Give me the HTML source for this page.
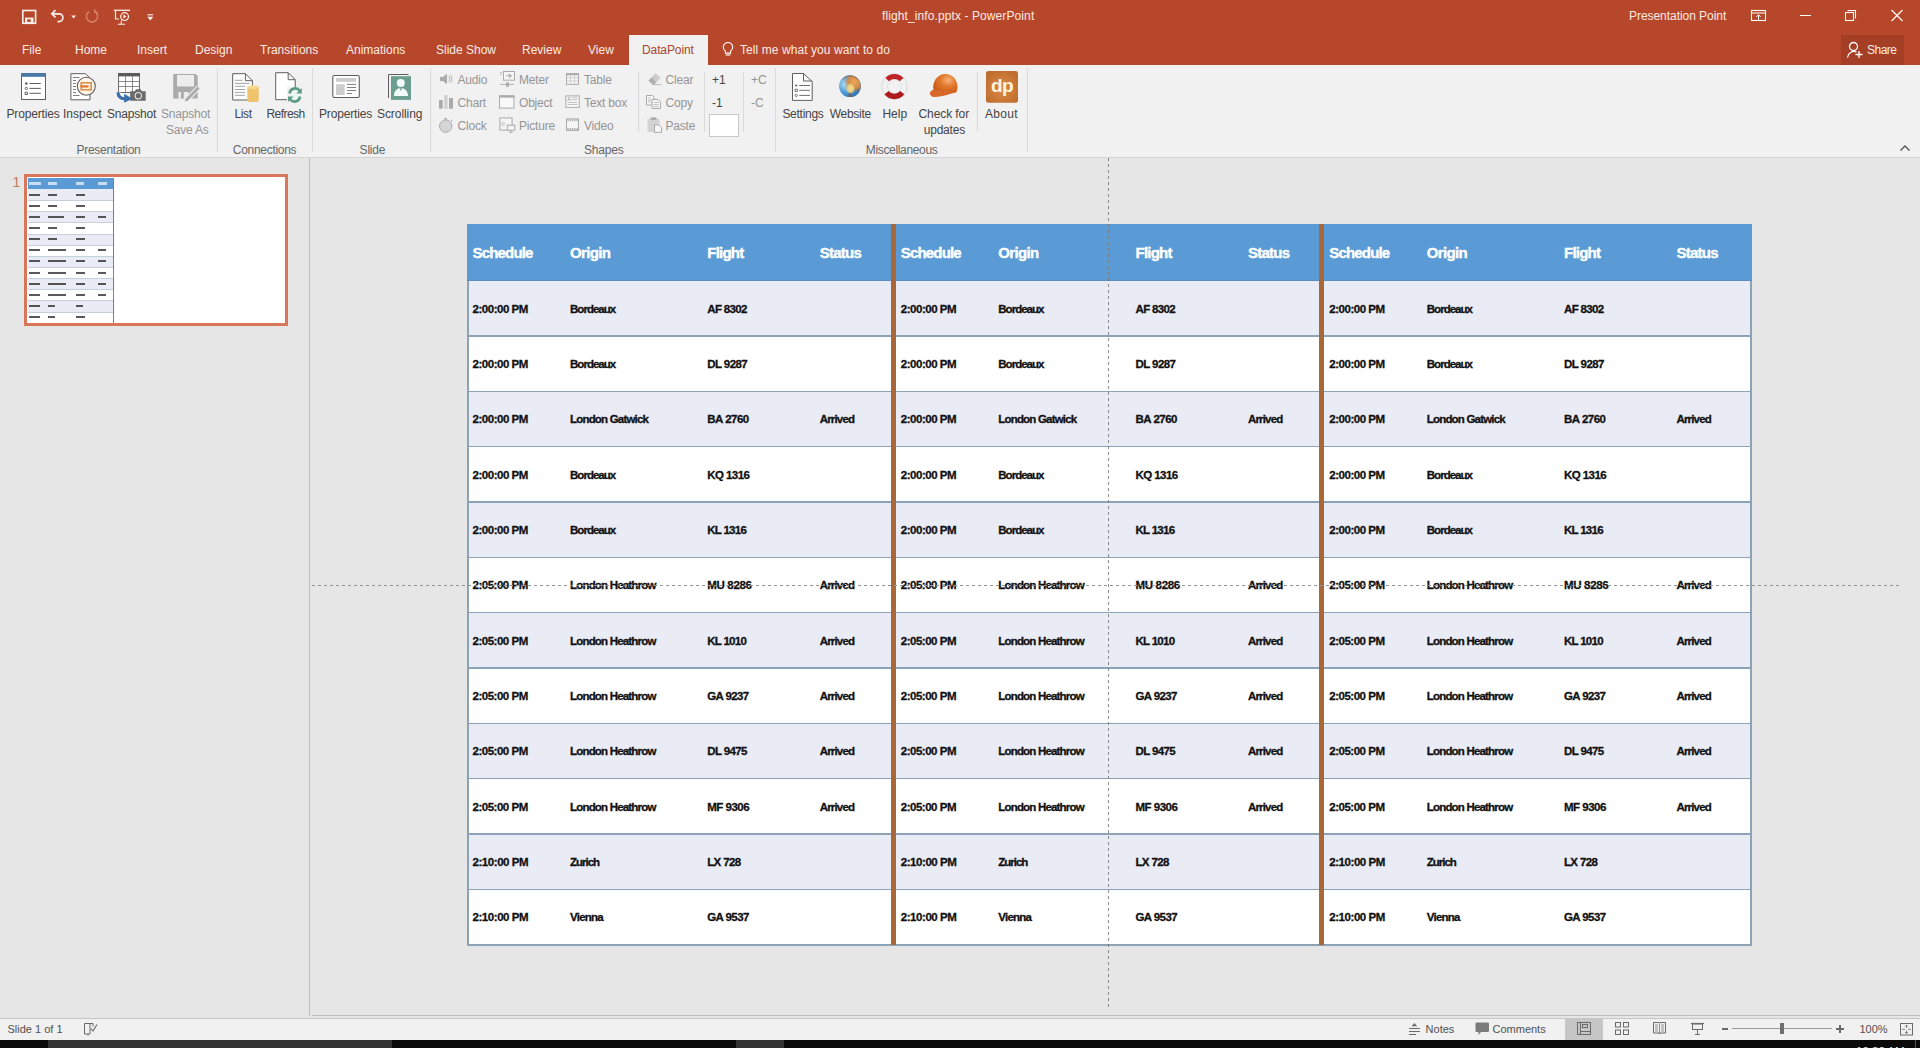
<!DOCTYPE html><html><head><meta charset="utf-8"><title>flight_info.pptx - PowerPoint</title><style>
html,body{margin:0;padding:0}body{width:1920px;height:1048px;overflow:hidden;position:relative;background:#E6E6E6;font-family:"Liberation Sans", sans-serif}
.t{position:absolute;white-space:nowrap}.r{position:absolute;display:block}
</style></head><body>
<div class="r" style="left:0px;top:0px;width:1920px;height:65px;background:#B7472A"></div>
<svg class="r" style="left:20px;top:8px" width="18" height="18" viewBox="20 8 18 18"><rect x="22.8" y="10.5" width="12.8" height="12.8" fill="none" stroke="#FDF0EB" stroke-width="1.6"/><rect x="25" y="17.6" width="8.5" height="5.5" fill="#FDF0EB"/><rect x="27.2" y="19.3" width="3.6" height="2.6" fill="#B7472A"/></svg>
<svg class="r" style="left:48px;top:7px" width="20" height="18" viewBox="48 7 20 18"><path d="M55.5 10.2L51.8 13.8 55.5 17.4" fill="none" stroke="#FDF0EB" stroke-width="1.7"/><path d="M52.5 13.8h6.5a3.9 3.9 0 0 1 0 7.8h-1.5" fill="none" stroke="#FDF0EB" stroke-width="1.7"/></svg>
<svg class="r" style="left:70px;top:14px" width="8" height="6" viewBox="70 14 8 6"><path d="M71.2 15.5h4.8l-2.4 3z" fill="#FDF0EB"/></svg>
<svg class="r" style="left:84px;top:7px" width="17" height="18" viewBox="84 7 17 18"><path d="M89.2 11.6a5.6 5.6 0 1 0 5.6 0" fill="none" stroke="#D9826A" stroke-width="1.4"/><path d="M94.8 8.9v3.4h3.2" fill="none" stroke="#D9826A" stroke-width="1.3"/></svg>
<svg class="r" style="left:112px;top:8px" width="20" height="18" viewBox="112 8 20 18"><path d="M113.8 10.3h16.2" stroke="#FDF0EB" stroke-width="1.3"/><path d="M115.5 10.5v8.5h3.5" fill="none" stroke="#FDF0EB" stroke-width="1.2"/><circle cx="124.6" cy="16.6" r="3.9" fill="none" stroke="#FDF0EB" stroke-width="1.2"/><path d="M123.4 14.6v4l3.1-2z" fill="#FDF0EB"/><path d="M121.3 20.5v3.3M117.8 24.2h7.2" stroke="#FDF0EB" stroke-width="1.1"/></svg>
<svg class="r" style="left:145px;top:12px" width="10" height="10" viewBox="145 12 10 10"><path d="M147.5 14.8h5.6" stroke="#FDF0EB" stroke-width="1.1"/><path d="M147.3 16.8h6l-3 3.6z" fill="#FDF0EB"/></svg>
<div class="t" style="left:882px;top:10.34px;font-size:12px;line-height:12px;color:#FBEAE4;font-weight:normal;letter-spacing:0.1px;">flight_info.pptx - PowerPoint</div>
<div class="t" style="left:1629px;top:9.84px;font-size:12px;line-height:12px;color:#FBEAE4;font-weight:normal;letter-spacing:-0.05px;">Presentation Point</div>
<svg class="r" style="left:1750px;top:9px" width="18" height="13" viewBox="0 0 18 13"><rect x="1.5" y="1.5" width="14" height="10" fill="none" stroke="#fff" stroke-width="1.1"/><path d="M1.5 4h14" stroke="#fff" stroke-width="1"/><path d="M8.5 11V6M6.3 8l2.2-2.2L10.7 8" fill="none" stroke="#fff" stroke-width="1"/></svg>
<div class="r" style="left:1800px;top:15px;width:11px;height:1px;background:#fff"></div>
<svg class="r" style="left:1844px;top:9px" width="14" height="13" viewBox="0 0 14 13"><rect x="1.5" y="3.5" width="8" height="8" fill="none" stroke="#fff" stroke-width="1.1"/><path d="M3.5 1.5h8v8" fill="none" stroke="#fff" stroke-width="1.1"/></svg>
<svg class="r" style="left:1890px;top:9px" width="14" height="13" viewBox="0 0 14 13"><path d="M1.5 1L12.5 12M12.5 1L1.5 12" stroke="#fff" stroke-width="1.1"/></svg>
<div class="t" style="left:22px;top:43.84px;font-size:12px;line-height:12px;color:#FBEAE4;font-weight:normal;letter-spacing:0px;">File</div>
<div class="t" style="left:75px;top:43.84px;font-size:12px;line-height:12px;color:#FBEAE4;font-weight:normal;letter-spacing:0px;">Home</div>
<div class="t" style="left:137px;top:43.84px;font-size:12px;line-height:12px;color:#FBEAE4;font-weight:normal;letter-spacing:0px;">Insert</div>
<div class="t" style="left:195px;top:43.84px;font-size:12px;line-height:12px;color:#FBEAE4;font-weight:normal;letter-spacing:0px;">Design</div>
<div class="t" style="left:260px;top:43.84px;font-size:12px;line-height:12px;color:#FBEAE4;font-weight:normal;letter-spacing:0px;">Transitions</div>
<div class="t" style="left:346px;top:43.84px;font-size:12px;line-height:12px;color:#FBEAE4;font-weight:normal;letter-spacing:0px;">Animations</div>
<div class="t" style="left:436px;top:43.84px;font-size:12px;line-height:12px;color:#FBEAE4;font-weight:normal;letter-spacing:0px;">Slide Show</div>
<div class="t" style="left:522px;top:43.84px;font-size:12px;line-height:12px;color:#FBEAE4;font-weight:normal;letter-spacing:0px;">Review</div>
<div class="t" style="left:588px;top:43.84px;font-size:12px;line-height:12px;color:#FBEAE4;font-weight:normal;letter-spacing:0px;">View</div>
<div class="r" style="left:629px;top:35px;width:79px;height:30px;background:#F1F1F1"></div>
<div class="t" style="left:642px;top:43.84px;font-size:12px;line-height:12px;color:#A9462B;font-weight:normal;letter-spacing:-0.1px;">DataPoint</div>
<svg class="r" style="left:721px;top:41px" width="14" height="16" viewBox="0 0 14 16"><path d="M7 1.5a4.6 4.6 0 0 0-2.6 8.4v2.2h5.2V9.9A4.6 4.6 0 0 0 7 1.5z" fill="none" stroke="#fff" stroke-width="1.1"/><path d="M4.6 14h4.8" stroke="#fff" stroke-width="1.1"/></svg>
<div class="t" style="left:740px;top:43.84px;font-size:12px;line-height:12px;color:#FBEAE4;font-weight:normal;letter-spacing:0.07px;">Tell me what you want to do</div>
<div class="r" style="left:1841px;top:35px;width:63px;height:30px;background:#A43F26"></div>
<svg class="r" style="left:1846px;top:41px" width="18" height="18" viewBox="0 0 18 18"><circle cx="7.5" cy="5.5" r="4" fill="none" stroke="#fff" stroke-width="1.3"/><path d="M1.5 16.5a6.5 6.5 0 0 1 9-5.5" fill="none" stroke="#fff" stroke-width="1.3"/><path d="M13 10v7M9.5 13.5h7" stroke="#fff" stroke-width="1.3"/></svg>
<div class="t" style="left:1867px;top:43.84px;font-size:12px;line-height:12px;color:#FBEAE4;font-weight:normal;letter-spacing:-0.5px;">Share</div>
<div class="r" style="left:0px;top:65px;width:1920px;height:92px;background:#F1F1F1"></div>
<div class="r" style="left:0px;top:157px;width:1920px;height:1px;background:#D5D5D5"></div>
<div class="r" style="left:217px;top:68px;width:1px;height:84px;background:#DADADA"></div>
<div class="r" style="left:312px;top:68px;width:1px;height:84px;background:#DADADA"></div>
<div class="r" style="left:430px;top:68px;width:1px;height:84px;background:#DADADA"></div>
<div class="r" style="left:775px;top:68px;width:1px;height:84px;background:#DADADA"></div>
<div class="r" style="left:1027px;top:68px;width:1px;height:84px;background:#DADADA"></div>
<div class="r" style="left:638px;top:72px;width:1px;height:60px;background:#DADADA"></div>
<div class="r" style="left:704px;top:72px;width:1px;height:60px;background:#DADADA"></div>
<div class="r" style="left:743px;top:72px;width:1px;height:60px;background:#DADADA"></div>
<div class="r" style="left:977px;top:72px;width:1px;height:60px;background:#DADADA"></div>
<div class="t" style="left:6.5px;top:108.24px;font-size:12px;line-height:12px;color:#444444;font-weight:normal;letter-spacing:-0.17px;">Properties</div>
<div class="t" style="left:63px;top:108.24px;font-size:12px;line-height:12px;color:#444444;font-weight:normal;letter-spacing:0px;">Inspect</div>
<div class="t" style="left:107px;top:108.24px;font-size:12px;line-height:12px;color:#444444;font-weight:normal;letter-spacing:-0.2px;">Snapshot</div>
<div class="t" style="left:161px;top:108.24px;font-size:12px;line-height:12px;color:#959595;font-weight:normal;letter-spacing:-0.2px;">Snapshot</div>
<div class="t" style="left:166px;top:124.24px;font-size:12px;line-height:12px;color:#959595;font-weight:normal;letter-spacing:-0.2px;">Save As</div>
<div class="t" style="left:76.5px;top:143.64px;font-size:12px;line-height:12px;color:#666666;font-weight:normal;letter-spacing:-0.28px;">Presentation</div>
<div class="t" style="left:234.5px;top:108.24px;font-size:12px;line-height:12px;color:#444444;font-weight:normal;letter-spacing:-0.4px;">List</div>
<div class="t" style="left:266.5px;top:108.24px;font-size:12px;line-height:12px;color:#444444;font-weight:normal;letter-spacing:-0.55px;">Refresh</div>
<div class="t" style="left:232.8px;top:143.64px;font-size:12px;line-height:12px;color:#666666;font-weight:normal;letter-spacing:-0.29px;">Connections</div>
<div class="t" style="left:319px;top:108.24px;font-size:12px;line-height:12px;color:#444444;font-weight:normal;letter-spacing:-0.17px;">Properties</div>
<div class="t" style="left:377px;top:108.24px;font-size:12px;line-height:12px;color:#444444;font-weight:normal;letter-spacing:-0.07px;">Scrolling</div>
<div class="t" style="left:359.6px;top:143.64px;font-size:12px;line-height:12px;color:#666666;font-weight:normal;letter-spacing:-0.2px;">Slide</div>
<div class="t" style="left:457.5px;top:73.84px;font-size:12px;line-height:12px;color:#959595;font-weight:normal;letter-spacing:-0.2px;">Audio</div>
<div class="t" style="left:457.5px;top:96.84px;font-size:12px;line-height:12px;color:#959595;font-weight:normal;letter-spacing:-0.2px;">Chart</div>
<div class="t" style="left:457.5px;top:119.84px;font-size:12px;line-height:12px;color:#959595;font-weight:normal;letter-spacing:-0.2px;">Clock</div>
<div class="t" style="left:519px;top:73.84px;font-size:12px;line-height:12px;color:#959595;font-weight:normal;letter-spacing:-0.2px;">Meter</div>
<div class="t" style="left:519px;top:96.84px;font-size:12px;line-height:12px;color:#959595;font-weight:normal;letter-spacing:-0.2px;">Object</div>
<div class="t" style="left:519px;top:119.84px;font-size:12px;line-height:12px;color:#959595;font-weight:normal;letter-spacing:-0.2px;">Picture</div>
<div class="t" style="left:584px;top:73.84px;font-size:12px;line-height:12px;color:#959595;font-weight:normal;letter-spacing:-0.2px;">Table</div>
<div class="t" style="left:584px;top:96.84px;font-size:12px;line-height:12px;color:#959595;font-weight:normal;letter-spacing:-0.2px;">Text box</div>
<div class="t" style="left:584px;top:119.84px;font-size:12px;line-height:12px;color:#959595;font-weight:normal;letter-spacing:-0.2px;">Video</div>
<div class="t" style="left:665.5px;top:73.84px;font-size:12px;line-height:12px;color:#959595;font-weight:normal;letter-spacing:-0.2px;">Clear</div>
<div class="t" style="left:665.5px;top:96.84px;font-size:12px;line-height:12px;color:#959595;font-weight:normal;letter-spacing:-0.2px;">Copy</div>
<div class="t" style="left:665.5px;top:119.84px;font-size:12px;line-height:12px;color:#959595;font-weight:normal;letter-spacing:-0.2px;">Paste</div>
<div class="t" style="left:584px;top:143.64px;font-size:12px;line-height:12px;color:#666666;font-weight:normal;letter-spacing:-0.2px;">Shapes</div>
<div class="t" style="left:712px;top:73.84px;font-size:12px;line-height:12px;color:#444444;font-weight:normal;letter-spacing:0px;">+1</div>
<div class="t" style="left:712px;top:96.84px;font-size:12px;line-height:12px;color:#444444;font-weight:normal;letter-spacing:0px;">-1</div>
<div class="r" style="left:709px;top:114px;width:30px;height:23px;background:#fff;border:1px solid #C8C8C8;box-sizing:border-box"></div>
<div class="t" style="left:751px;top:73.84px;font-size:12px;line-height:12px;color:#959595;font-weight:normal;letter-spacing:0px;">+C</div>
<div class="t" style="left:751px;top:96.84px;font-size:12px;line-height:12px;color:#959595;font-weight:normal;letter-spacing:0px;">-C</div>
<div class="t" style="left:782.4px;top:108.24px;font-size:12px;line-height:12px;color:#444444;font-weight:normal;letter-spacing:-0.27px;">Settings</div>
<div class="t" style="left:829.7px;top:108.24px;font-size:12px;line-height:12px;color:#444444;font-weight:normal;letter-spacing:-0.26px;">Website</div>
<div class="t" style="left:882.4px;top:108.24px;font-size:12px;line-height:12px;color:#444444;font-weight:normal;letter-spacing:0px;">Help</div>
<div class="t" style="left:918.5px;top:108.24px;font-size:12px;line-height:12px;color:#444444;font-weight:normal;letter-spacing:-0.09px;">Check for</div>
<div class="t" style="left:923.7px;top:124.24px;font-size:12px;line-height:12px;color:#444444;font-weight:normal;letter-spacing:-0.2px;">updates</div>
<div class="t" style="left:985px;top:108.24px;font-size:12px;line-height:12px;color:#444444;font-weight:normal;letter-spacing:0.3px;">About</div>
<div class="t" style="left:865.8px;top:143.64px;font-size:12px;line-height:12px;color:#666666;font-weight:normal;letter-spacing:-0.34px;">Miscellaneous</div>
<svg class="r" style="left:1899px;top:144px" width="12" height="8" viewBox="0 0 12 8"><path d="M1.5 6.5L6 2l4.5 4.5" fill="none" stroke="#555" stroke-width="1.4"/></svg>
<svg class="r" style="left:18px;top:70px" width="32" height="34" viewBox="18 70 32 34"><rect x="21.5" y="73.5" width="24" height="26" fill="#fff" stroke="#5F5F5F" stroke-width="1"/><rect x="21" y="73" width="25" height="3.8" fill="#4A78A8"/><circle cx="26.3" cy="83.5" r="1.3" fill="#5F5F5F"/><circle cx="26.3" cy="88.4" r="1.2" fill="none" stroke="#5F5F5F" stroke-width="0.9"/><rect x="25.1" y="92.2" width="2.3" height="2.3" fill="none" stroke="#5F5F5F" stroke-width="0.9"/><path d="M29.4 83.5h11.4M29.4 88.4h11.4M29.4 93.3h11.4" stroke="#5F5F5F" stroke-width="1"/></svg>
<svg class="r" style="left:66px;top:70px" width="34" height="34" viewBox="66 70 34 34"><path d="M70.9 73.7h14.6l4.5 4.5v21.6h-19.1z" fill="#fff" stroke="#5F5F5F" stroke-width="1"/><path d="M73 77.5h6.5M73 80.5h3M73 83.5h3M73 86.5h3M73 89.5h3M73 92.5h3M73 95.5h6.5" stroke="#5F5F5F" stroke-width="0.8"/><circle cx="86.3" cy="86.3" r="9" fill="#FFF6E6" stroke="#5F5F5F" stroke-width="1.1"/><rect x="81.2" y="82.8" width="10" height="7" fill="none" stroke="#D9904A" stroke-width="1.6"/><rect x="80.5" y="85.2" width="8" height="2.4" fill="#E07B3C"/></svg>
<svg class="r" style="left:112px;top:70px" width="38" height="36" viewBox="112 70 38 36"><rect x="118.6" y="73.5" width="20.8" height="19" fill="#fff" stroke="#5A5A5A" stroke-width="0.9"/><rect x="118.2" y="73" width="21.6" height="3.4" fill="#5A5A5A"/><path d="M118.6 81.5h20.8M118.6 86.5h20.8M125.5 76.4v16.1M132.5 76.4v16.1" stroke="#6A6A6A" stroke-width="0.75"/><path d="M130.2 91.2h4.6l1.2-2h4.7l1.2 2h3.8v9.6h-15.5z" fill="#6B6B6B"/><circle cx="138.3" cy="95.8" r="3.3" fill="none" stroke="#fff" stroke-width="1"/><circle cx="138.3" cy="95.8" r="2.2" fill="#6B6B6B"/><path d="M118 92.3c0 4.3 2.5 6.6 7.5 6.6" fill="none" stroke="#fff" stroke-width="5" opacity="0.8"/><path d="M118 92.3c0 4.3 2.5 6.6 7.5 6.6" fill="none" stroke="#3D6FAB" stroke-width="3.2"/><path d="M124.2 93.8l8.3 5-8.3 3.9z" fill="#3D6FAB"/></svg>
<svg class="r" style="left:170px;top:70px" width="34" height="34" viewBox="170 70 34 34"><path d="M173.2 74h22.5l2 2v22.5h-24.5z" fill="#ABABAB"/><rect x="177" y="75" width="17" height="11.5" fill="#EDEDED"/><rect x="178.5" y="92" width="10" height="6.5" fill="#EDEDED"/><rect x="181" y="92" width="2.8" height="6.5" fill="#ABABAB"/><path d="M186 100.5l12.5-13" stroke="#F1F1F1" stroke-width="5"/><path d="M186.5 100l12-12.5" stroke="#ABABAB" stroke-width="3"/><path d="M184.5 101.8l1.5-3.5 2 2z" fill="#ABABAB"/></svg>
<svg class="r" style="left:229px;top:70px" width="34" height="36" viewBox="229 70 34 36"><path d="M232.7 73.7h12.7l7 7v19.3h-19.7z" fill="#fff" stroke="#5F5F5F" stroke-width="1"/><path d="M245.4 73.7v7h7" fill="none" stroke="#5F5F5F" stroke-width="1"/><path d="M235 80.3h7.5M235 83.4h14.5M235 86.3h10M235 89.5h10M235 92.4h10M235 95.3h10" stroke="#7A7A7A" stroke-width="0.7"/><rect x="247.3" y="86" width="11.4" height="16" rx="2" fill="#EEC36C"/><ellipse cx="253" cy="87.2" rx="5.7" ry="2" fill="#F5D995"/></svg>
<svg class="r" style="left:272px;top:70px" width="34" height="36" viewBox="272 70 34 36"><path d="M275.7 72.7h12.5l7 7v20h-19.5z" fill="#fff" stroke="#5F5F5F" stroke-width="1"/><path d="M288.2 72.7v7h7" fill="none" stroke="#5F5F5F" stroke-width="1"/><rect x="287" y="87" width="16" height="16" fill="#F1F1F1"/><circle cx="295" cy="95" r="6" fill="#ECF6F2"/><path d="M289.6 93.5a5.6 5.6 0 0 1 10.2-2.6" fill="none" stroke="#5E9A86" stroke-width="2.6"/><path d="M301.8 88v5.5h-5.5z" fill="#5E9A86"/><path d="M300 96.5a5.6 5.6 0 0 1-10.2 2.6" fill="none" stroke="#5E9A86" stroke-width="2.6"/><path d="M288 102v-5.5h5.5z" fill="#5E9A86"/></svg>
<svg class="r" style="left:329px;top:72px" width="34" height="30" viewBox="329 72 34 30"><rect x="332.8" y="75.5" width="26.5" height="22" rx="1.5" fill="#fff" stroke="#5F5F5F" stroke-width="1.1"/><rect x="336" y="78" width="20" height="3.8" fill="#CDCDCD"/><rect x="336" y="84.2" width="8.7" height="10.8" fill="#CDCDCD"/><path d="M347 84.4h9M347 87.5h9M347 90.5h9M347 93.5h5" stroke="#5F5F5F" stroke-width="0.8"/></svg>
<svg class="r" style="left:385px;top:71px" width="30" height="32" viewBox="385 71 30 32"><path d="M388.5 98V74.5h20" fill="none" stroke="#5F5F5F" stroke-width="1"/><rect x="391" y="76.2" width="20" height="23.7" fill="#6B9E8E"/><circle cx="400.8" cy="83" r="4" fill="#F2FBF8"/><path d="M394 96c0-5 3-8 6.8-8s7.2 3 7.2 8z" fill="#F2FBF8"/><path d="M399.5 88.3l1.3 2.8 1.3-2.8z" fill="#6B9E8E"/></svg>
<svg class="r" style="left:438px;top:72px" width="16" height="14" viewBox="438 72 16 14"><path d="M440 77h2.8l4.2-3.2v10.4l-4.2-3.2H440z" fill="#ABABAB"/><path d="M448.7 76.3a4 4 0 0 1 0 5.4M450.3 74.8a6.3 6.3 0 0 1 0 8.4" fill="none" stroke="#ABABAB" stroke-width="0.9"/></svg>
<svg class="r" style="left:438px;top:94px" width="16" height="16" viewBox="438 94 16 16"><rect x="439" y="100" width="3.7" height="8.7" fill="#ABABAB"/><rect x="444.3" y="95" width="3.3" height="13.7" fill="#CFCFCF"/><rect x="449" y="98" width="4" height="10.7" fill="#ABABAB"/></svg>
<svg class="r" style="left:438px;top:115px" width="16" height="19" viewBox="438 115 16 19"><circle cx="445.7" cy="126.1" r="6.2" fill="#D5D5D5" stroke="#ABABAB" stroke-width="1"/><path d="M444.3 118.5h2.8M445.7 118.5v1.5M451 119.8l1.2 1.2" stroke="#ABABAB" stroke-width="1.2"/></svg>
<svg class="r" style="left:498px;top:70px" width="18" height="18" viewBox="498 70 18 18"><rect x="503.5" y="71.5" width="11" height="8.7" fill="#F6F6F6" stroke="#ABABAB" stroke-width="1"/><path d="M506 75.8h5M509 73.8l2.2 2-2.2 2" fill="none" stroke="#ABABAB" stroke-width="1.1"/><path d="M500 72.5h2M500 74.5h1.5" stroke="#ABABAB" stroke-width="0.8"/><path d="M500 84.4h14" stroke="#ABABAB" stroke-width="0.9"/><rect x="506" y="82.4" width="3" height="4.3" fill="#ABABAB"/></svg>
<svg class="r" style="left:498px;top:94px" width="18" height="16" viewBox="498 94 18 16"><rect x="499.5" y="95.9" width="14.5" height="12.2" fill="#F8F8F8" stroke="#ABABAB" stroke-width="1"/><rect x="499" y="95.4" width="15.5" height="2.2" fill="#ABABAB"/></svg>
<svg class="r" style="left:498px;top:116px" width="19" height="18" viewBox="498 116 19 18"><rect x="499.9" y="117.9" width="12.2" height="12.2" fill="#F4F4F4" stroke="#ABABAB" stroke-width="1"/><circle cx="503" cy="124" r="2.2" fill="#DADADA"/><rect x="507.3" y="125.2" width="7.5" height="5" fill="#F4F4F4" stroke="#ABABAB" stroke-width="1"/><path d="M509 132.3h4M511 130.3v2" stroke="#ABABAB" stroke-width="0.9"/></svg>
<svg class="r" style="left:564px;top:72px" width="16" height="14" viewBox="564 72 16 14"><rect x="566.5" y="73.8" width="12" height="10.6" fill="#F6F6F6" stroke="#ABABAB" stroke-width="1"/><rect x="566" y="73.3" width="12.7" height="2" fill="#ABABAB"/><path d="M566.5 77.7h12M566.5 81h12M570.5 75v9.4M574.5 75v9.4" stroke="#C2C2C2" stroke-width="0.7"/></svg>
<svg class="r" style="left:564px;top:94px" width="17" height="15" viewBox="564 94 17 15"><rect x="565.8" y="95.9" width="13.5" height="11.5" fill="#F8F8F8" stroke="#ABABAB" stroke-width="1"/><path d="M567.5 101l1.7-4 1.7 4M568 99.8h2.2M572 97.8h5.5M572 99.8h5.5M567.5 102.5h10M567.5 104.5h10" fill="none" stroke="#ABABAB" stroke-width="0.7"/></svg>
<svg class="r" style="left:564px;top:117px" width="16" height="15" viewBox="564 117 16 15"><rect x="566.5" y="118.9" width="12" height="11.5" fill="#F6F6F6" stroke="#ABABAB" stroke-width="1"/><path d="M566.5 120.2h12M566.5 129.1h12" stroke="#ABABAB" stroke-width="2" stroke-dasharray="1 0.8"/></svg>
<svg class="r" style="left:646px;top:71px" width="17" height="15" viewBox="646 71 17 15"><path d="M648.5 80.5l7.2-7.2 4.8 4.8-7.2 7.2z" fill="#CBCBCB"/><path d="M648.5 80.5l3-3 4.8 4.8-3 3z" fill="#B0B0B0"/><path d="M652.5 84.6h9" stroke="#B5B5B5" stroke-width="0.9"/></svg>
<svg class="r" style="left:645px;top:94px" width="17" height="16" viewBox="645 94 17 16"><path d="M646.5 95.5h6l1.5 1.5v8h-7.5z" fill="#F6F6F6" stroke="#ABABAB" stroke-width="1"/><path d="M652 99.5h6l2.5 2.5v6.5H652z" fill="#F6F6F6" stroke="#ABABAB" stroke-width="1"/><path d="M648 98h3M648 100h3M648 102h3M653.5 102.5h5M653.5 104.5h5M653.5 106.5h5" stroke="#ABABAB" stroke-width="0.7"/></svg>
<svg class="r" style="left:646px;top:116px" width="18" height="18" viewBox="646 116 18 18"><rect x="647.5" y="119" width="12" height="13" fill="#D3D3D3"/><rect x="650.5" y="117.4" width="6" height="2.5" fill="#ABABAB"/><path d="M654.5 124.9h4.5l2.5 2.5v5h-7z" fill="#F6F6F6" stroke="#ABABAB" stroke-width="1"/></svg>
<svg class="r" style="left:789px;top:70px" width="28" height="34" viewBox="789 70 28 34"><path d="M792.5 73.5h11l8.7 8.2v18.7h-19.7z" fill="#fff" stroke="#5F5F5F" stroke-width="1"/><path d="M803.5 73.5v7.5h8.7" fill="none" stroke="#5F5F5F" stroke-width="1"/><circle cx="796.2" cy="85.5" r="1.1" fill="#5F5F5F"/><rect x="795.1" y="89.2" width="2.2" height="2.2" fill="none" stroke="#5F5F5F" stroke-width="0.8"/><circle cx="796.2" cy="95.4" r="1.1" fill="none" stroke="#5F5F5F" stroke-width="0.8"/><path d="M799.2 85.5h10.8M799.2 90.3h10.8M799.2 95.4h10.8" stroke="#5F5F5F" stroke-width="0.9"/></svg>
<svg class="r" style="left:836px;top:72px" width="29" height="29" viewBox="836 72 29 29"><defs><radialGradient id="gb" cx="0.3" cy="0.4" r="0.8"><stop offset="0" stop-color="#B5E2F6"/><stop offset="0.5" stop-color="#4C9AD6"/><stop offset="0.9" stop-color="#2B6DB0"/><stop offset="1" stop-color="#3F5873"/></radialGradient><radialGradient id="go" cx="0.72" cy="0.3" r="0.5"><stop offset="0" stop-color="#F2A55A" stop-opacity="1"/><stop offset="0.6" stop-color="#D88A3C" stop-opacity="0.9"/><stop offset="1" stop-color="#A86B3A" stop-opacity="0"/></radialGradient><radialGradient id="gy" cx="0.5" cy="0.5" r="0.5"><stop offset="0" stop-color="#F4E29A"/><stop offset="0.7" stop-color="#EBCB78" stop-opacity="0.9"/><stop offset="1" stop-color="#E8C070" stop-opacity="0"/></radialGradient><clipPath id="gc"><circle cx="850" cy="86.2" r="10.9"/></clipPath></defs><circle cx="850" cy="86.2" r="10.9" fill="url(#gb)"/><g clip-path="url(#gc)"><circle cx="850" cy="86.2" r="11" fill="url(#go)"/><ellipse cx="850.5" cy="88.5" rx="4.8" ry="5.5" fill="url(#gy)"/><path d="M847.5 98c0-2.5 1-5 2.6-5s2.6 2.5 2.6 5z" fill="#6B6258" opacity="0.7"/></g><path d="M841.5 80a10.9 10.9 0 0 1 17 0" fill="none" stroke="#7A5C40" stroke-width="0.9" opacity="0.6"/></svg>
<svg class="r" style="left:879px;top:72px" width="31" height="31" viewBox="879 72 31 31"><circle cx="894.4" cy="86.4" r="9.8" fill="none" stroke="#F2F2F2" stroke-width="5.6"/><circle cx="894.4" cy="86.4" r="12.7" fill="none" stroke="#CFCFCF" stroke-width="0.7"/><circle cx="894.4" cy="86.4" r="7" fill="none" stroke="#D8D8D8" stroke-width="0.6"/><path d="M887.2 79.6a9.8 9.8 0 0 1 14.4 0" fill="none" stroke="#C0222A" stroke-width="5"/><path d="M902.2 92.6a9.8 9.8 0 0 1-15.6 0" fill="none" stroke="#AE1A20" stroke-width="5.4"/></svg>
<svg class="r" style="left:926px;top:70px" width="36" height="32" viewBox="926 70 36 32"><defs><radialGradient id="hh" cx="0.62" cy="0.3" r="0.7"><stop offset="0" stop-color="#F8B27A"/><stop offset="0.45" stop-color="#E37A2E"/><stop offset="1" stop-color="#C85A14"/></radialGradient></defs><path d="M933.5 90c-1.5-7 3-15.5 11-16 7.5-0.5 13 5.5 13 12.5 0 2.5-0.5 4.5-1.5 6l-10 2z" fill="url(#hh)"/><path d="M930 92.5c1.5-2.5 3.5-3 6.5-2.5 5 0.8 11 1.5 19.5 1.5-5 2.5-13 5-21 5.5-3 0.2-5.5-2-5-4.5z" fill="#D9692A"/></svg>
<svg class="r" style="left:984px;top:69px" width="36" height="36" viewBox="984 69 36 36"><defs><radialGradient id="dp" cx="0.5" cy="0.55" r="0.75"><stop offset="0" stop-color="#DB8B45"/><stop offset="1" stop-color="#B8662A"/></radialGradient></defs><rect x="986" y="71" width="32" height="31.7" rx="2.5" fill="url(#dp)"/><text x="1002" y="91.8" text-anchor="middle" font-family="Liberation Sans" font-weight="bold" font-size="19" fill="#FFF4DE" letter-spacing="-0.5">dp</text></svg>
<div class="r" style="left:309px;top:158px;width:1px;height:858px;background:#BDBDBD"></div>
<div class="r" style="left:312px;top:1015px;width:1608px;height:1px;background:#BDBDBD"></div>
<div class="t" style="left:12.5px;top:175.15px;font-size:14px;line-height:14px;color:#BE7A62;font-weight:normal;letter-spacing:0px;">1</div>
<div class="r" style="left:24px;top:174px;width:264px;height:152px;border:3px solid #D9765A;box-sizing:border-box;background:#fff"></div>
<div class="r" style="left:27.7px;top:178px;width:85.3px;height:11px;background:#5B9BD5"></div>
<div class="r" style="left:27.7px;top:189.00px;width:85.3px;height:11.14px;background:#E9EBF5"></div>
<div class="r" style="left:27.7px;top:200.14px;width:85.3px;height:11.14px;background:#FFFFFF"></div>
<div class="r" style="left:27.7px;top:200.14px;width:85.3px;height:0.5px;background:#C5D0DC"></div>
<div class="r" style="left:27.7px;top:211.28px;width:85.3px;height:11.14px;background:#E9EBF5"></div>
<div class="r" style="left:27.7px;top:211.28px;width:85.3px;height:0.5px;background:#C5D0DC"></div>
<div class="r" style="left:27.7px;top:222.43px;width:85.3px;height:11.14px;background:#FFFFFF"></div>
<div class="r" style="left:27.7px;top:222.43px;width:85.3px;height:0.5px;background:#C5D0DC"></div>
<div class="r" style="left:27.7px;top:233.57px;width:85.3px;height:11.14px;background:#E9EBF5"></div>
<div class="r" style="left:27.7px;top:233.57px;width:85.3px;height:0.5px;background:#C5D0DC"></div>
<div class="r" style="left:27.7px;top:244.71px;width:85.3px;height:11.14px;background:#FFFFFF"></div>
<div class="r" style="left:27.7px;top:244.71px;width:85.3px;height:0.5px;background:#C5D0DC"></div>
<div class="r" style="left:27.7px;top:255.85px;width:85.3px;height:11.14px;background:#E9EBF5"></div>
<div class="r" style="left:27.7px;top:255.85px;width:85.3px;height:0.5px;background:#C5D0DC"></div>
<div class="r" style="left:27.7px;top:266.99px;width:85.3px;height:11.14px;background:#FFFFFF"></div>
<div class="r" style="left:27.7px;top:266.99px;width:85.3px;height:0.5px;background:#C5D0DC"></div>
<div class="r" style="left:27.7px;top:278.13px;width:85.3px;height:11.14px;background:#E9EBF5"></div>
<div class="r" style="left:27.7px;top:278.13px;width:85.3px;height:0.5px;background:#C5D0DC"></div>
<div class="r" style="left:27.7px;top:289.27px;width:85.3px;height:11.14px;background:#FFFFFF"></div>
<div class="r" style="left:27.7px;top:289.27px;width:85.3px;height:0.5px;background:#C5D0DC"></div>
<div class="r" style="left:27.7px;top:300.42px;width:85.3px;height:11.14px;background:#E9EBF5"></div>
<div class="r" style="left:27.7px;top:300.42px;width:85.3px;height:0.5px;background:#C5D0DC"></div>
<div class="r" style="left:27.7px;top:311.56px;width:85.3px;height:11.14px;background:#FFFFFF"></div>
<div class="r" style="left:27.7px;top:311.56px;width:85.3px;height:0.5px;background:#C5D0DC"></div>
<div class="r" style="left:113px;top:178px;width:1px;height:145px;background:#8C7A6A"></div>
<div class="r" style="left:28.9px;top:182px;width:12.5px;height:3px;background:#EAF2FA;opacity:0.75"></div>
<div class="r" style="left:48.2px;top:182px;width:8.4px;height:3px;background:#EAF2FA;opacity:0.75"></div>
<div class="r" style="left:75.7px;top:182px;width:8.3px;height:3px;background:#EAF2FA;opacity:0.75"></div>
<div class="r" style="left:97.9px;top:182px;width:9.1px;height:3px;background:#EAF2FA;opacity:0.75"></div>
<div class="r" style="left:28.9px;top:194px;width:10.9px;height:2px;background:#222;opacity:0.75"></div>
<div class="r" style="left:48.2px;top:194px;width:9.2px;height:2px;background:#222;opacity:0.75"></div>
<div class="r" style="left:75.7px;top:194px;width:9.2px;height:2px;background:#222;opacity:0.75"></div>
<div class="r" style="left:28.9px;top:205px;width:10.9px;height:2px;background:#222;opacity:0.75"></div>
<div class="r" style="left:48.2px;top:205px;width:9.2px;height:2px;background:#222;opacity:0.75"></div>
<div class="r" style="left:75.7px;top:205px;width:9.2px;height:2px;background:#222;opacity:0.75"></div>
<div class="r" style="left:28.9px;top:216px;width:10.9px;height:2px;background:#222;opacity:0.75"></div>
<div class="r" style="left:48.2px;top:216px;width:15.6px;height:2px;background:#222;opacity:0.75"></div>
<div class="r" style="left:75.7px;top:216px;width:9.2px;height:2px;background:#222;opacity:0.75"></div>
<div class="r" style="left:97.9px;top:216px;width:8.4px;height:2px;background:#222;opacity:0.75"></div>
<div class="r" style="left:28.9px;top:227px;width:10.9px;height:2px;background:#222;opacity:0.75"></div>
<div class="r" style="left:48.2px;top:227px;width:9.2px;height:2px;background:#222;opacity:0.75"></div>
<div class="r" style="left:75.7px;top:227px;width:9.2px;height:2px;background:#222;opacity:0.75"></div>
<div class="r" style="left:28.9px;top:238px;width:10.9px;height:2px;background:#222;opacity:0.75"></div>
<div class="r" style="left:48.2px;top:238px;width:9.2px;height:2px;background:#222;opacity:0.75"></div>
<div class="r" style="left:75.7px;top:238px;width:9.2px;height:2px;background:#222;opacity:0.75"></div>
<div class="r" style="left:28.9px;top:249px;width:10.9px;height:2px;background:#222;opacity:0.75"></div>
<div class="r" style="left:48.2px;top:249px;width:17.6px;height:2px;background:#222;opacity:0.75"></div>
<div class="r" style="left:75.7px;top:249px;width:9.2px;height:2px;background:#222;opacity:0.75"></div>
<div class="r" style="left:97.9px;top:249px;width:8.4px;height:2px;background:#222;opacity:0.75"></div>
<div class="r" style="left:28.9px;top:260px;width:10.9px;height:2px;background:#222;opacity:0.75"></div>
<div class="r" style="left:48.2px;top:260px;width:17.6px;height:2px;background:#222;opacity:0.75"></div>
<div class="r" style="left:75.7px;top:260px;width:9.2px;height:2px;background:#222;opacity:0.75"></div>
<div class="r" style="left:97.9px;top:260px;width:8.4px;height:2px;background:#222;opacity:0.75"></div>
<div class="r" style="left:28.9px;top:272px;width:10.9px;height:2px;background:#222;opacity:0.75"></div>
<div class="r" style="left:48.2px;top:272px;width:17.6px;height:2px;background:#222;opacity:0.75"></div>
<div class="r" style="left:75.7px;top:272px;width:9.2px;height:2px;background:#222;opacity:0.75"></div>
<div class="r" style="left:97.9px;top:272px;width:8.4px;height:2px;background:#222;opacity:0.75"></div>
<div class="r" style="left:28.9px;top:283px;width:10.9px;height:2px;background:#222;opacity:0.75"></div>
<div class="r" style="left:48.2px;top:283px;width:17.6px;height:2px;background:#222;opacity:0.75"></div>
<div class="r" style="left:75.7px;top:283px;width:9.2px;height:2px;background:#222;opacity:0.75"></div>
<div class="r" style="left:97.9px;top:283px;width:8.4px;height:2px;background:#222;opacity:0.75"></div>
<div class="r" style="left:28.9px;top:294px;width:10.9px;height:2px;background:#222;opacity:0.75"></div>
<div class="r" style="left:48.2px;top:294px;width:17.6px;height:2px;background:#222;opacity:0.75"></div>
<div class="r" style="left:75.7px;top:294px;width:9.2px;height:2px;background:#222;opacity:0.75"></div>
<div class="r" style="left:97.9px;top:294px;width:8.4px;height:2px;background:#222;opacity:0.75"></div>
<div class="r" style="left:28.9px;top:305px;width:10.9px;height:2px;background:#222;opacity:0.75"></div>
<div class="r" style="left:48.2px;top:305px;width:6.5px;height:2px;background:#222;opacity:0.75"></div>
<div class="r" style="left:75.7px;top:305px;width:7px;height:2px;background:#222;opacity:0.75"></div>
<div class="r" style="left:28.9px;top:316px;width:10.9px;height:2px;background:#222;opacity:0.75"></div>
<div class="r" style="left:48.2px;top:316px;width:7px;height:2px;background:#222;opacity:0.75"></div>
<div class="r" style="left:75.7px;top:316px;width:9.2px;height:2px;background:#222;opacity:0.75"></div>
<div class="r" style="left:467px;top:224px;width:1285px;height:57px;background:#5B9BD5"></div>
<div class="r" style="left:467px;top:281.00px;width:1285px;height:55.33px;background:#E9EBF5"></div>
<div class="r" style="left:467px;top:336.33px;width:1285px;height:55.33px;background:#FFFFFF"></div>
<div class="r" style="left:467px;top:391.67px;width:1285px;height:55.33px;background:#E9EBF5"></div>
<div class="r" style="left:467px;top:447.00px;width:1285px;height:55.33px;background:#FFFFFF"></div>
<div class="r" style="left:467px;top:502.33px;width:1285px;height:55.33px;background:#E9EBF5"></div>
<div class="r" style="left:467px;top:557.67px;width:1285px;height:55.33px;background:#FFFFFF"></div>
<div class="r" style="left:467px;top:613.00px;width:1285px;height:55.33px;background:#E9EBF5"></div>
<div class="r" style="left:467px;top:668.33px;width:1285px;height:55.33px;background:#FFFFFF"></div>
<div class="r" style="left:467px;top:723.67px;width:1285px;height:55.33px;background:#E9EBF5"></div>
<div class="r" style="left:467px;top:779.00px;width:1285px;height:55.33px;background:#FFFFFF"></div>
<div class="r" style="left:467px;top:834.33px;width:1285px;height:55.33px;background:#E9EBF5"></div>
<div class="r" style="left:467px;top:889.67px;width:1285px;height:55.33px;background:#FFFFFF"></div>
<div class="r" style="left:467px;top:335.33px;width:1285px;height:1.3px;background:#8CA2B6"></div>
<div class="r" style="left:467px;top:390.67px;width:1285px;height:1.3px;background:#8CA2B6"></div>
<div class="r" style="left:467px;top:446.00px;width:1285px;height:1.3px;background:#8CA2B6"></div>
<div class="r" style="left:467px;top:501.33px;width:1285px;height:1.3px;background:#8CA2B6"></div>
<div class="r" style="left:467px;top:556.67px;width:1285px;height:1.3px;background:#8CA2B6"></div>
<div class="r" style="left:467px;top:612.00px;width:1285px;height:1.3px;background:#8CA2B6"></div>
<div class="r" style="left:467px;top:667.33px;width:1285px;height:1.3px;background:#8CA2B6"></div>
<div class="r" style="left:467px;top:722.67px;width:1285px;height:1.3px;background:#8CA2B6"></div>
<div class="r" style="left:467px;top:778.00px;width:1285px;height:1.3px;background:#8CA2B6"></div>
<div class="r" style="left:467px;top:833.33px;width:1285px;height:1.3px;background:#8CA2B6"></div>
<div class="r" style="left:467px;top:888.67px;width:1285px;height:1.3px;background:#8CA2B6"></div>
<div class="r" style="left:467px;top:280px;width:1285px;height:1px;background:#5A8DC0"></div>
<div class="r" style="left:467px;top:281px;width:2px;height:665px;background:#8CA2B6"></div>
<div class="r" style="left:1750px;top:281px;width:2px;height:665px;background:#8CA2B6"></div>
<div class="r" style="left:467px;top:944px;width:1285px;height:2px;background:#8CA2B6"></div>
<div class="r" style="left:891px;top:224px;width:5px;height:721px;background:#A8683A"></div>
<div class="r" style="left:1319px;top:224px;width:5px;height:721px;background:#A8683A"></div>
<div class="t" style="left:472.5px;top:245.00px;font-size:15px;line-height:15px;color:#FFFFFF;font-weight:bold;letter-spacing:-0.82px;-webkit-text-stroke:0.35px #fff;">Schedule</div>
<div class="t" style="left:570.0px;top:245.00px;font-size:15px;line-height:15px;color:#FFFFFF;font-weight:bold;letter-spacing:-0.66px;-webkit-text-stroke:0.35px #fff;">Origin</div>
<div class="t" style="left:707.25px;top:245.00px;font-size:15px;line-height:15px;color:#FFFFFF;font-weight:bold;letter-spacing:-0.76px;-webkit-text-stroke:0.35px #fff;">Flight</div>
<div class="t" style="left:819.75px;top:245.00px;font-size:15px;line-height:15px;color:#FFFFFF;font-weight:bold;letter-spacing:-0.77px;-webkit-text-stroke:0.35px #fff;">Status</div>
<div class="t" style="left:472.5px;top:303.53px;font-size:11.5px;line-height:11.5px;color:#111;font-weight:bold;letter-spacing:-0.467px;-webkit-text-stroke:0.3px #111;">2:00:00 PM</div>
<div class="t" style="left:570.0px;top:303.53px;font-size:11.5px;line-height:11.5px;color:#111;font-weight:bold;letter-spacing:-0.971px;-webkit-text-stroke:0.3px #111;">Bordeaux</div>
<div class="t" style="left:707.25px;top:303.53px;font-size:11.5px;line-height:11.5px;color:#111;font-weight:bold;letter-spacing:-0.667px;-webkit-text-stroke:0.3px #111;">AF 8302</div>
<div class="t" style="left:472.5px;top:358.87px;font-size:11.5px;line-height:11.5px;color:#111;font-weight:bold;letter-spacing:-0.467px;-webkit-text-stroke:0.3px #111;">2:00:00 PM</div>
<div class="t" style="left:570.0px;top:358.87px;font-size:11.5px;line-height:11.5px;color:#111;font-weight:bold;letter-spacing:-0.971px;-webkit-text-stroke:0.3px #111;">Bordeaux</div>
<div class="t" style="left:707.25px;top:358.87px;font-size:11.5px;line-height:11.5px;color:#111;font-weight:bold;letter-spacing:-0.583px;-webkit-text-stroke:0.3px #111;">DL 9287</div>
<div class="t" style="left:472.5px;top:414.20px;font-size:11.5px;line-height:11.5px;color:#111;font-weight:bold;letter-spacing:-0.467px;-webkit-text-stroke:0.3px #111;">2:00:00 PM</div>
<div class="t" style="left:570.0px;top:414.20px;font-size:11.5px;line-height:11.5px;color:#111;font-weight:bold;letter-spacing:-0.808px;-webkit-text-stroke:0.3px #111;">London Gatwick</div>
<div class="t" style="left:707.25px;top:414.20px;font-size:11.5px;line-height:11.5px;color:#111;font-weight:bold;letter-spacing:-0.5px;-webkit-text-stroke:0.3px #111;">BA 2760</div>
<div class="t" style="left:819.75px;top:414.20px;font-size:11.5px;line-height:11.5px;color:#111;font-weight:bold;letter-spacing:-0.833px;-webkit-text-stroke:0.3px #111;">Arrived</div>
<div class="t" style="left:472.5px;top:469.53px;font-size:11.5px;line-height:11.5px;color:#111;font-weight:bold;letter-spacing:-0.467px;-webkit-text-stroke:0.3px #111;">2:00:00 PM</div>
<div class="t" style="left:570.0px;top:469.53px;font-size:11.5px;line-height:11.5px;color:#111;font-weight:bold;letter-spacing:-0.971px;-webkit-text-stroke:0.3px #111;">Bordeaux</div>
<div class="t" style="left:707.25px;top:469.53px;font-size:11.5px;line-height:11.5px;color:#111;font-weight:bold;letter-spacing:-0.567px;-webkit-text-stroke:0.3px #111;">KQ 1316</div>
<div class="t" style="left:472.5px;top:524.87px;font-size:11.5px;line-height:11.5px;color:#111;font-weight:bold;letter-spacing:-0.467px;-webkit-text-stroke:0.3px #111;">2:00:00 PM</div>
<div class="t" style="left:570.0px;top:524.87px;font-size:11.5px;line-height:11.5px;color:#111;font-weight:bold;letter-spacing:-0.971px;-webkit-text-stroke:0.3px #111;">Bordeaux</div>
<div class="t" style="left:707.25px;top:524.87px;font-size:11.5px;line-height:11.5px;color:#111;font-weight:bold;letter-spacing:-0.717px;-webkit-text-stroke:0.3px #111;">KL 1316</div>
<div class="t" style="left:472.5px;top:580.20px;font-size:11.5px;line-height:11.5px;color:#111;font-weight:bold;letter-spacing:-0.478px;-webkit-text-stroke:0.3px #111;">2:05:00 PM</div>
<div class="t" style="left:570.0px;top:580.20px;font-size:11.5px;line-height:11.5px;color:#111;font-weight:bold;letter-spacing:-0.814px;-webkit-text-stroke:0.3px #111;">London Heathrow</div>
<div class="t" style="left:707.25px;top:580.20px;font-size:11.5px;line-height:11.5px;color:#111;font-weight:bold;letter-spacing:-0.333px;-webkit-text-stroke:0.3px #111;">MU 8286</div>
<div class="t" style="left:819.75px;top:580.20px;font-size:11.5px;line-height:11.5px;color:#111;font-weight:bold;letter-spacing:-0.833px;-webkit-text-stroke:0.3px #111;">Arrived</div>
<div class="t" style="left:472.5px;top:635.53px;font-size:11.5px;line-height:11.5px;color:#111;font-weight:bold;letter-spacing:-0.478px;-webkit-text-stroke:0.3px #111;">2:05:00 PM</div>
<div class="t" style="left:570.0px;top:635.53px;font-size:11.5px;line-height:11.5px;color:#111;font-weight:bold;letter-spacing:-0.814px;-webkit-text-stroke:0.3px #111;">London Heathrow</div>
<div class="t" style="left:707.25px;top:635.53px;font-size:11.5px;line-height:11.5px;color:#111;font-weight:bold;letter-spacing:-0.717px;-webkit-text-stroke:0.3px #111;">KL 1010</div>
<div class="t" style="left:819.75px;top:635.53px;font-size:11.5px;line-height:11.5px;color:#111;font-weight:bold;letter-spacing:-0.833px;-webkit-text-stroke:0.3px #111;">Arrived</div>
<div class="t" style="left:472.5px;top:690.87px;font-size:11.5px;line-height:11.5px;color:#111;font-weight:bold;letter-spacing:-0.478px;-webkit-text-stroke:0.3px #111;">2:05:00 PM</div>
<div class="t" style="left:570.0px;top:690.87px;font-size:11.5px;line-height:11.5px;color:#111;font-weight:bold;letter-spacing:-0.814px;-webkit-text-stroke:0.3px #111;">London Heathrow</div>
<div class="t" style="left:707.25px;top:690.87px;font-size:11.5px;line-height:11.5px;color:#111;font-weight:bold;letter-spacing:-0.625px;-webkit-text-stroke:0.3px #111;">GA 9237</div>
<div class="t" style="left:819.75px;top:690.87px;font-size:11.5px;line-height:11.5px;color:#111;font-weight:bold;letter-spacing:-0.833px;-webkit-text-stroke:0.3px #111;">Arrived</div>
<div class="t" style="left:472.5px;top:746.20px;font-size:11.5px;line-height:11.5px;color:#111;font-weight:bold;letter-spacing:-0.478px;-webkit-text-stroke:0.3px #111;">2:05:00 PM</div>
<div class="t" style="left:570.0px;top:746.20px;font-size:11.5px;line-height:11.5px;color:#111;font-weight:bold;letter-spacing:-0.814px;-webkit-text-stroke:0.3px #111;">London Heathrow</div>
<div class="t" style="left:707.25px;top:746.20px;font-size:11.5px;line-height:11.5px;color:#111;font-weight:bold;letter-spacing:-0.617px;-webkit-text-stroke:0.3px #111;">DL 9475</div>
<div class="t" style="left:819.75px;top:746.20px;font-size:11.5px;line-height:11.5px;color:#111;font-weight:bold;letter-spacing:-0.833px;-webkit-text-stroke:0.3px #111;">Arrived</div>
<div class="t" style="left:472.5px;top:801.53px;font-size:11.5px;line-height:11.5px;color:#111;font-weight:bold;letter-spacing:-0.478px;-webkit-text-stroke:0.3px #111;">2:05:00 PM</div>
<div class="t" style="left:570.0px;top:801.53px;font-size:11.5px;line-height:11.5px;color:#111;font-weight:bold;letter-spacing:-0.814px;-webkit-text-stroke:0.3px #111;">London Heathrow</div>
<div class="t" style="left:707.25px;top:801.53px;font-size:11.5px;line-height:11.5px;color:#111;font-weight:bold;letter-spacing:-0.5px;-webkit-text-stroke:0.3px #111;">MF 9306</div>
<div class="t" style="left:819.75px;top:801.53px;font-size:11.5px;line-height:11.5px;color:#111;font-weight:bold;letter-spacing:-0.833px;-webkit-text-stroke:0.3px #111;">Arrived</div>
<div class="t" style="left:472.5px;top:856.87px;font-size:11.5px;line-height:11.5px;color:#111;font-weight:bold;letter-spacing:-0.444px;-webkit-text-stroke:0.3px #111;">2:10:00 PM</div>
<div class="t" style="left:570.0px;top:856.87px;font-size:11.5px;line-height:11.5px;color:#111;font-weight:bold;letter-spacing:-1.0px;-webkit-text-stroke:0.3px #111;">Zurich</div>
<div class="t" style="left:707.25px;top:856.87px;font-size:11.5px;line-height:11.5px;color:#111;font-weight:bold;letter-spacing:-0.65px;-webkit-text-stroke:0.3px #111;">LX 728</div>
<div class="t" style="left:472.5px;top:912.20px;font-size:11.5px;line-height:11.5px;color:#111;font-weight:bold;letter-spacing:-0.444px;-webkit-text-stroke:0.3px #111;">2:10:00 PM</div>
<div class="t" style="left:570.0px;top:912.20px;font-size:11.5px;line-height:11.5px;color:#111;font-weight:bold;letter-spacing:-0.75px;-webkit-text-stroke:0.3px #111;">Vienna</div>
<div class="t" style="left:707.25px;top:912.20px;font-size:11.5px;line-height:11.5px;color:#111;font-weight:bold;letter-spacing:-0.583px;-webkit-text-stroke:0.3px #111;">GA 9537</div>
<div class="t" style="left:900.75px;top:245.00px;font-size:15px;line-height:15px;color:#FFFFFF;font-weight:bold;letter-spacing:-0.82px;-webkit-text-stroke:0.35px #fff;">Schedule</div>
<div class="t" style="left:998.25px;top:245.00px;font-size:15px;line-height:15px;color:#FFFFFF;font-weight:bold;letter-spacing:-0.66px;-webkit-text-stroke:0.35px #fff;">Origin</div>
<div class="t" style="left:1135.5px;top:245.00px;font-size:15px;line-height:15px;color:#FFFFFF;font-weight:bold;letter-spacing:-0.76px;-webkit-text-stroke:0.35px #fff;">Flight</div>
<div class="t" style="left:1248.0px;top:245.00px;font-size:15px;line-height:15px;color:#FFFFFF;font-weight:bold;letter-spacing:-0.77px;-webkit-text-stroke:0.35px #fff;">Status</div>
<div class="t" style="left:900.75px;top:303.53px;font-size:11.5px;line-height:11.5px;color:#111;font-weight:bold;letter-spacing:-0.467px;-webkit-text-stroke:0.3px #111;">2:00:00 PM</div>
<div class="t" style="left:998.25px;top:303.53px;font-size:11.5px;line-height:11.5px;color:#111;font-weight:bold;letter-spacing:-0.971px;-webkit-text-stroke:0.3px #111;">Bordeaux</div>
<div class="t" style="left:1135.5px;top:303.53px;font-size:11.5px;line-height:11.5px;color:#111;font-weight:bold;letter-spacing:-0.667px;-webkit-text-stroke:0.3px #111;">AF 8302</div>
<div class="t" style="left:900.75px;top:358.87px;font-size:11.5px;line-height:11.5px;color:#111;font-weight:bold;letter-spacing:-0.467px;-webkit-text-stroke:0.3px #111;">2:00:00 PM</div>
<div class="t" style="left:998.25px;top:358.87px;font-size:11.5px;line-height:11.5px;color:#111;font-weight:bold;letter-spacing:-0.971px;-webkit-text-stroke:0.3px #111;">Bordeaux</div>
<div class="t" style="left:1135.5px;top:358.87px;font-size:11.5px;line-height:11.5px;color:#111;font-weight:bold;letter-spacing:-0.583px;-webkit-text-stroke:0.3px #111;">DL 9287</div>
<div class="t" style="left:900.75px;top:414.20px;font-size:11.5px;line-height:11.5px;color:#111;font-weight:bold;letter-spacing:-0.467px;-webkit-text-stroke:0.3px #111;">2:00:00 PM</div>
<div class="t" style="left:998.25px;top:414.20px;font-size:11.5px;line-height:11.5px;color:#111;font-weight:bold;letter-spacing:-0.808px;-webkit-text-stroke:0.3px #111;">London Gatwick</div>
<div class="t" style="left:1135.5px;top:414.20px;font-size:11.5px;line-height:11.5px;color:#111;font-weight:bold;letter-spacing:-0.5px;-webkit-text-stroke:0.3px #111;">BA 2760</div>
<div class="t" style="left:1248.0px;top:414.20px;font-size:11.5px;line-height:11.5px;color:#111;font-weight:bold;letter-spacing:-0.833px;-webkit-text-stroke:0.3px #111;">Arrived</div>
<div class="t" style="left:900.75px;top:469.53px;font-size:11.5px;line-height:11.5px;color:#111;font-weight:bold;letter-spacing:-0.467px;-webkit-text-stroke:0.3px #111;">2:00:00 PM</div>
<div class="t" style="left:998.25px;top:469.53px;font-size:11.5px;line-height:11.5px;color:#111;font-weight:bold;letter-spacing:-0.971px;-webkit-text-stroke:0.3px #111;">Bordeaux</div>
<div class="t" style="left:1135.5px;top:469.53px;font-size:11.5px;line-height:11.5px;color:#111;font-weight:bold;letter-spacing:-0.567px;-webkit-text-stroke:0.3px #111;">KQ 1316</div>
<div class="t" style="left:900.75px;top:524.87px;font-size:11.5px;line-height:11.5px;color:#111;font-weight:bold;letter-spacing:-0.467px;-webkit-text-stroke:0.3px #111;">2:00:00 PM</div>
<div class="t" style="left:998.25px;top:524.87px;font-size:11.5px;line-height:11.5px;color:#111;font-weight:bold;letter-spacing:-0.971px;-webkit-text-stroke:0.3px #111;">Bordeaux</div>
<div class="t" style="left:1135.5px;top:524.87px;font-size:11.5px;line-height:11.5px;color:#111;font-weight:bold;letter-spacing:-0.717px;-webkit-text-stroke:0.3px #111;">KL 1316</div>
<div class="t" style="left:900.75px;top:580.20px;font-size:11.5px;line-height:11.5px;color:#111;font-weight:bold;letter-spacing:-0.478px;-webkit-text-stroke:0.3px #111;">2:05:00 PM</div>
<div class="t" style="left:998.25px;top:580.20px;font-size:11.5px;line-height:11.5px;color:#111;font-weight:bold;letter-spacing:-0.814px;-webkit-text-stroke:0.3px #111;">London Heathrow</div>
<div class="t" style="left:1135.5px;top:580.20px;font-size:11.5px;line-height:11.5px;color:#111;font-weight:bold;letter-spacing:-0.333px;-webkit-text-stroke:0.3px #111;">MU 8286</div>
<div class="t" style="left:1248.0px;top:580.20px;font-size:11.5px;line-height:11.5px;color:#111;font-weight:bold;letter-spacing:-0.833px;-webkit-text-stroke:0.3px #111;">Arrived</div>
<div class="t" style="left:900.75px;top:635.53px;font-size:11.5px;line-height:11.5px;color:#111;font-weight:bold;letter-spacing:-0.478px;-webkit-text-stroke:0.3px #111;">2:05:00 PM</div>
<div class="t" style="left:998.25px;top:635.53px;font-size:11.5px;line-height:11.5px;color:#111;font-weight:bold;letter-spacing:-0.814px;-webkit-text-stroke:0.3px #111;">London Heathrow</div>
<div class="t" style="left:1135.5px;top:635.53px;font-size:11.5px;line-height:11.5px;color:#111;font-weight:bold;letter-spacing:-0.717px;-webkit-text-stroke:0.3px #111;">KL 1010</div>
<div class="t" style="left:1248.0px;top:635.53px;font-size:11.5px;line-height:11.5px;color:#111;font-weight:bold;letter-spacing:-0.833px;-webkit-text-stroke:0.3px #111;">Arrived</div>
<div class="t" style="left:900.75px;top:690.87px;font-size:11.5px;line-height:11.5px;color:#111;font-weight:bold;letter-spacing:-0.478px;-webkit-text-stroke:0.3px #111;">2:05:00 PM</div>
<div class="t" style="left:998.25px;top:690.87px;font-size:11.5px;line-height:11.5px;color:#111;font-weight:bold;letter-spacing:-0.814px;-webkit-text-stroke:0.3px #111;">London Heathrow</div>
<div class="t" style="left:1135.5px;top:690.87px;font-size:11.5px;line-height:11.5px;color:#111;font-weight:bold;letter-spacing:-0.625px;-webkit-text-stroke:0.3px #111;">GA 9237</div>
<div class="t" style="left:1248.0px;top:690.87px;font-size:11.5px;line-height:11.5px;color:#111;font-weight:bold;letter-spacing:-0.833px;-webkit-text-stroke:0.3px #111;">Arrived</div>
<div class="t" style="left:900.75px;top:746.20px;font-size:11.5px;line-height:11.5px;color:#111;font-weight:bold;letter-spacing:-0.478px;-webkit-text-stroke:0.3px #111;">2:05:00 PM</div>
<div class="t" style="left:998.25px;top:746.20px;font-size:11.5px;line-height:11.5px;color:#111;font-weight:bold;letter-spacing:-0.814px;-webkit-text-stroke:0.3px #111;">London Heathrow</div>
<div class="t" style="left:1135.5px;top:746.20px;font-size:11.5px;line-height:11.5px;color:#111;font-weight:bold;letter-spacing:-0.617px;-webkit-text-stroke:0.3px #111;">DL 9475</div>
<div class="t" style="left:1248.0px;top:746.20px;font-size:11.5px;line-height:11.5px;color:#111;font-weight:bold;letter-spacing:-0.833px;-webkit-text-stroke:0.3px #111;">Arrived</div>
<div class="t" style="left:900.75px;top:801.53px;font-size:11.5px;line-height:11.5px;color:#111;font-weight:bold;letter-spacing:-0.478px;-webkit-text-stroke:0.3px #111;">2:05:00 PM</div>
<div class="t" style="left:998.25px;top:801.53px;font-size:11.5px;line-height:11.5px;color:#111;font-weight:bold;letter-spacing:-0.814px;-webkit-text-stroke:0.3px #111;">London Heathrow</div>
<div class="t" style="left:1135.5px;top:801.53px;font-size:11.5px;line-height:11.5px;color:#111;font-weight:bold;letter-spacing:-0.5px;-webkit-text-stroke:0.3px #111;">MF 9306</div>
<div class="t" style="left:1248.0px;top:801.53px;font-size:11.5px;line-height:11.5px;color:#111;font-weight:bold;letter-spacing:-0.833px;-webkit-text-stroke:0.3px #111;">Arrived</div>
<div class="t" style="left:900.75px;top:856.87px;font-size:11.5px;line-height:11.5px;color:#111;font-weight:bold;letter-spacing:-0.444px;-webkit-text-stroke:0.3px #111;">2:10:00 PM</div>
<div class="t" style="left:998.25px;top:856.87px;font-size:11.5px;line-height:11.5px;color:#111;font-weight:bold;letter-spacing:-1.0px;-webkit-text-stroke:0.3px #111;">Zurich</div>
<div class="t" style="left:1135.5px;top:856.87px;font-size:11.5px;line-height:11.5px;color:#111;font-weight:bold;letter-spacing:-0.65px;-webkit-text-stroke:0.3px #111;">LX 728</div>
<div class="t" style="left:900.75px;top:912.20px;font-size:11.5px;line-height:11.5px;color:#111;font-weight:bold;letter-spacing:-0.444px;-webkit-text-stroke:0.3px #111;">2:10:00 PM</div>
<div class="t" style="left:998.25px;top:912.20px;font-size:11.5px;line-height:11.5px;color:#111;font-weight:bold;letter-spacing:-0.75px;-webkit-text-stroke:0.3px #111;">Vienna</div>
<div class="t" style="left:1135.5px;top:912.20px;font-size:11.5px;line-height:11.5px;color:#111;font-weight:bold;letter-spacing:-0.583px;-webkit-text-stroke:0.3px #111;">GA 9537</div>
<div class="t" style="left:1329.25px;top:245.00px;font-size:15px;line-height:15px;color:#FFFFFF;font-weight:bold;letter-spacing:-0.82px;-webkit-text-stroke:0.35px #fff;">Schedule</div>
<div class="t" style="left:1426.75px;top:245.00px;font-size:15px;line-height:15px;color:#FFFFFF;font-weight:bold;letter-spacing:-0.66px;-webkit-text-stroke:0.35px #fff;">Origin</div>
<div class="t" style="left:1564px;top:245.00px;font-size:15px;line-height:15px;color:#FFFFFF;font-weight:bold;letter-spacing:-0.76px;-webkit-text-stroke:0.35px #fff;">Flight</div>
<div class="t" style="left:1676.5px;top:245.00px;font-size:15px;line-height:15px;color:#FFFFFF;font-weight:bold;letter-spacing:-0.77px;-webkit-text-stroke:0.35px #fff;">Status</div>
<div class="t" style="left:1329.25px;top:303.53px;font-size:11.5px;line-height:11.5px;color:#111;font-weight:bold;letter-spacing:-0.467px;-webkit-text-stroke:0.3px #111;">2:00:00 PM</div>
<div class="t" style="left:1426.75px;top:303.53px;font-size:11.5px;line-height:11.5px;color:#111;font-weight:bold;letter-spacing:-0.971px;-webkit-text-stroke:0.3px #111;">Bordeaux</div>
<div class="t" style="left:1564px;top:303.53px;font-size:11.5px;line-height:11.5px;color:#111;font-weight:bold;letter-spacing:-0.667px;-webkit-text-stroke:0.3px #111;">AF 8302</div>
<div class="t" style="left:1329.25px;top:358.87px;font-size:11.5px;line-height:11.5px;color:#111;font-weight:bold;letter-spacing:-0.467px;-webkit-text-stroke:0.3px #111;">2:00:00 PM</div>
<div class="t" style="left:1426.75px;top:358.87px;font-size:11.5px;line-height:11.5px;color:#111;font-weight:bold;letter-spacing:-0.971px;-webkit-text-stroke:0.3px #111;">Bordeaux</div>
<div class="t" style="left:1564px;top:358.87px;font-size:11.5px;line-height:11.5px;color:#111;font-weight:bold;letter-spacing:-0.583px;-webkit-text-stroke:0.3px #111;">DL 9287</div>
<div class="t" style="left:1329.25px;top:414.20px;font-size:11.5px;line-height:11.5px;color:#111;font-weight:bold;letter-spacing:-0.467px;-webkit-text-stroke:0.3px #111;">2:00:00 PM</div>
<div class="t" style="left:1426.75px;top:414.20px;font-size:11.5px;line-height:11.5px;color:#111;font-weight:bold;letter-spacing:-0.808px;-webkit-text-stroke:0.3px #111;">London Gatwick</div>
<div class="t" style="left:1564px;top:414.20px;font-size:11.5px;line-height:11.5px;color:#111;font-weight:bold;letter-spacing:-0.5px;-webkit-text-stroke:0.3px #111;">BA 2760</div>
<div class="t" style="left:1676.5px;top:414.20px;font-size:11.5px;line-height:11.5px;color:#111;font-weight:bold;letter-spacing:-0.833px;-webkit-text-stroke:0.3px #111;">Arrived</div>
<div class="t" style="left:1329.25px;top:469.53px;font-size:11.5px;line-height:11.5px;color:#111;font-weight:bold;letter-spacing:-0.467px;-webkit-text-stroke:0.3px #111;">2:00:00 PM</div>
<div class="t" style="left:1426.75px;top:469.53px;font-size:11.5px;line-height:11.5px;color:#111;font-weight:bold;letter-spacing:-0.971px;-webkit-text-stroke:0.3px #111;">Bordeaux</div>
<div class="t" style="left:1564px;top:469.53px;font-size:11.5px;line-height:11.5px;color:#111;font-weight:bold;letter-spacing:-0.567px;-webkit-text-stroke:0.3px #111;">KQ 1316</div>
<div class="t" style="left:1329.25px;top:524.87px;font-size:11.5px;line-height:11.5px;color:#111;font-weight:bold;letter-spacing:-0.467px;-webkit-text-stroke:0.3px #111;">2:00:00 PM</div>
<div class="t" style="left:1426.75px;top:524.87px;font-size:11.5px;line-height:11.5px;color:#111;font-weight:bold;letter-spacing:-0.971px;-webkit-text-stroke:0.3px #111;">Bordeaux</div>
<div class="t" style="left:1564px;top:524.87px;font-size:11.5px;line-height:11.5px;color:#111;font-weight:bold;letter-spacing:-0.717px;-webkit-text-stroke:0.3px #111;">KL 1316</div>
<div class="t" style="left:1329.25px;top:580.20px;font-size:11.5px;line-height:11.5px;color:#111;font-weight:bold;letter-spacing:-0.478px;-webkit-text-stroke:0.3px #111;">2:05:00 PM</div>
<div class="t" style="left:1426.75px;top:580.20px;font-size:11.5px;line-height:11.5px;color:#111;font-weight:bold;letter-spacing:-0.814px;-webkit-text-stroke:0.3px #111;">London Heathrow</div>
<div class="t" style="left:1564px;top:580.20px;font-size:11.5px;line-height:11.5px;color:#111;font-weight:bold;letter-spacing:-0.333px;-webkit-text-stroke:0.3px #111;">MU 8286</div>
<div class="t" style="left:1676.5px;top:580.20px;font-size:11.5px;line-height:11.5px;color:#111;font-weight:bold;letter-spacing:-0.833px;-webkit-text-stroke:0.3px #111;">Arrived</div>
<div class="t" style="left:1329.25px;top:635.53px;font-size:11.5px;line-height:11.5px;color:#111;font-weight:bold;letter-spacing:-0.478px;-webkit-text-stroke:0.3px #111;">2:05:00 PM</div>
<div class="t" style="left:1426.75px;top:635.53px;font-size:11.5px;line-height:11.5px;color:#111;font-weight:bold;letter-spacing:-0.814px;-webkit-text-stroke:0.3px #111;">London Heathrow</div>
<div class="t" style="left:1564px;top:635.53px;font-size:11.5px;line-height:11.5px;color:#111;font-weight:bold;letter-spacing:-0.717px;-webkit-text-stroke:0.3px #111;">KL 1010</div>
<div class="t" style="left:1676.5px;top:635.53px;font-size:11.5px;line-height:11.5px;color:#111;font-weight:bold;letter-spacing:-0.833px;-webkit-text-stroke:0.3px #111;">Arrived</div>
<div class="t" style="left:1329.25px;top:690.87px;font-size:11.5px;line-height:11.5px;color:#111;font-weight:bold;letter-spacing:-0.478px;-webkit-text-stroke:0.3px #111;">2:05:00 PM</div>
<div class="t" style="left:1426.75px;top:690.87px;font-size:11.5px;line-height:11.5px;color:#111;font-weight:bold;letter-spacing:-0.814px;-webkit-text-stroke:0.3px #111;">London Heathrow</div>
<div class="t" style="left:1564px;top:690.87px;font-size:11.5px;line-height:11.5px;color:#111;font-weight:bold;letter-spacing:-0.625px;-webkit-text-stroke:0.3px #111;">GA 9237</div>
<div class="t" style="left:1676.5px;top:690.87px;font-size:11.5px;line-height:11.5px;color:#111;font-weight:bold;letter-spacing:-0.833px;-webkit-text-stroke:0.3px #111;">Arrived</div>
<div class="t" style="left:1329.25px;top:746.20px;font-size:11.5px;line-height:11.5px;color:#111;font-weight:bold;letter-spacing:-0.478px;-webkit-text-stroke:0.3px #111;">2:05:00 PM</div>
<div class="t" style="left:1426.75px;top:746.20px;font-size:11.5px;line-height:11.5px;color:#111;font-weight:bold;letter-spacing:-0.814px;-webkit-text-stroke:0.3px #111;">London Heathrow</div>
<div class="t" style="left:1564px;top:746.20px;font-size:11.5px;line-height:11.5px;color:#111;font-weight:bold;letter-spacing:-0.617px;-webkit-text-stroke:0.3px #111;">DL 9475</div>
<div class="t" style="left:1676.5px;top:746.20px;font-size:11.5px;line-height:11.5px;color:#111;font-weight:bold;letter-spacing:-0.833px;-webkit-text-stroke:0.3px #111;">Arrived</div>
<div class="t" style="left:1329.25px;top:801.53px;font-size:11.5px;line-height:11.5px;color:#111;font-weight:bold;letter-spacing:-0.478px;-webkit-text-stroke:0.3px #111;">2:05:00 PM</div>
<div class="t" style="left:1426.75px;top:801.53px;font-size:11.5px;line-height:11.5px;color:#111;font-weight:bold;letter-spacing:-0.814px;-webkit-text-stroke:0.3px #111;">London Heathrow</div>
<div class="t" style="left:1564px;top:801.53px;font-size:11.5px;line-height:11.5px;color:#111;font-weight:bold;letter-spacing:-0.5px;-webkit-text-stroke:0.3px #111;">MF 9306</div>
<div class="t" style="left:1676.5px;top:801.53px;font-size:11.5px;line-height:11.5px;color:#111;font-weight:bold;letter-spacing:-0.833px;-webkit-text-stroke:0.3px #111;">Arrived</div>
<div class="t" style="left:1329.25px;top:856.87px;font-size:11.5px;line-height:11.5px;color:#111;font-weight:bold;letter-spacing:-0.444px;-webkit-text-stroke:0.3px #111;">2:10:00 PM</div>
<div class="t" style="left:1426.75px;top:856.87px;font-size:11.5px;line-height:11.5px;color:#111;font-weight:bold;letter-spacing:-1.0px;-webkit-text-stroke:0.3px #111;">Zurich</div>
<div class="t" style="left:1564px;top:856.87px;font-size:11.5px;line-height:11.5px;color:#111;font-weight:bold;letter-spacing:-0.65px;-webkit-text-stroke:0.3px #111;">LX 728</div>
<div class="t" style="left:1329.25px;top:912.20px;font-size:11.5px;line-height:11.5px;color:#111;font-weight:bold;letter-spacing:-0.444px;-webkit-text-stroke:0.3px #111;">2:10:00 PM</div>
<div class="t" style="left:1426.75px;top:912.20px;font-size:11.5px;line-height:11.5px;color:#111;font-weight:bold;letter-spacing:-0.75px;-webkit-text-stroke:0.3px #111;">Vienna</div>
<div class="t" style="left:1564px;top:912.20px;font-size:11.5px;line-height:11.5px;color:#111;font-weight:bold;letter-spacing:-0.583px;-webkit-text-stroke:0.3px #111;">GA 9537</div>
<div class="r" style="left:312px;top:585px;width:1590px;height:1px;background:repeating-linear-gradient(90deg,#939393 0 3.3px,transparent 3.3px 6px)"></div>
<div class="r" style="left:1108px;top:158px;width:1px;height:852px;background:repeating-linear-gradient(180deg,#7a7a7a 0 3px,transparent 3px 6px);opacity:0.85"></div>
<div class="r" style="left:0px;top:1018px;width:1920px;height:1px;background:#C6C6C6"></div>
<div class="r" style="left:0px;top:1019px;width:1920px;height:21px;background:#F1F1F1"></div>
<div class="r" style="left:0px;top:1040px;width:1920px;height:8px;background:#0A0A0A"></div>
<div class="r" style="left:48px;top:1040px;width:344px;height:8px;background:#333333"></div>
<div class="r" style="left:736px;top:1040px;width:48px;height:8px;background:#333333"></div>
<div class="r" style="left:1915px;top:1040px;width:1px;height:8px;background:#555"></div>
<div class="t" style="left:7.5px;top:1023.89px;font-size:11px;line-height:11px;color:#505050;font-weight:normal;letter-spacing:0.0px;">Slide 1 of 1</div>
<svg class="r" style="left:82px;top:1020px" width="18" height="17" viewBox="82 1020 18 17"><path d="M84.5 1023.5h5.5v10.5h-5.5zM90 1023.5h3v3" fill="none" stroke="#6A6A6A" stroke-width="1"/><path d="M91 1028.5l2 2.5 4-6.5" fill="none" stroke="#6A6A6A" stroke-width="1.1"/><path d="M88 1034v1.5" stroke="#6A6A6A" stroke-width="1"/></svg>
<svg class="r" style="left:1407px;top:1021px" width="15" height="16" viewBox="1407 1021 15 16"><path d="M1414.4 1023l-2.8 3.2h5.6z" fill="#6A6A6A"/><path d="M1409 1028.5h11M1409 1031.5h11M1409 1034.5h7" stroke="#6A6A6A" stroke-width="1"/></svg>
<div class="t" style="left:1425.6px;top:1023.89px;font-size:11px;line-height:11px;color:#505050;font-weight:normal;letter-spacing:0px;">Notes</div>
<svg class="r" style="left:1474px;top:1021px" width="16" height="16" viewBox="1474 1021 16 16"><path d="M1476.5 1022.5h11.5a1 1 0 0 1 1 1v7.5a1 1 0 0 1-1 1h-7l-2.5 3v-3h-2a1 1 0 0 1-1-1v-7.5a1 1 0 0 1 1-1z" fill="#7A7A7A"/></svg>
<div class="t" style="left:1492.5px;top:1023.89px;font-size:11px;line-height:11px;color:#505050;font-weight:normal;letter-spacing:0px;">Comments</div>
<div class="r" style="left:1565px;top:1019px;width:38px;height:21px;background:#C6C6C6"></div>
<svg class="r" style="left:1576px;top:1021px" width="16" height="16" viewBox="1576 1021 16 16"><rect x="1577.5" y="1022.5" width="13" height="12" fill="none" stroke="#6A6A6A" stroke-width="1"/><path d="M1580.5 1022.5v12M1580.5 1031.5h10" stroke="#6A6A6A" stroke-width="1"/><rect x="1582.5" y="1024.5" width="5" height="3" fill="none" stroke="#6A6A6A" stroke-width="1"/></svg>
<svg class="r" style="left:1614px;top:1021px" width="16" height="16" viewBox="1614 1021 16 16"><rect x="1615.5" y="1022.5" width="5" height="4.5" fill="none" stroke="#6A6A6A" stroke-width="1"/><rect x="1623.5" y="1022.5" width="5" height="4.5" fill="none" stroke="#6A6A6A" stroke-width="1"/><rect x="1615.5" y="1030" width="5" height="4.5" fill="none" stroke="#6A6A6A" stroke-width="1"/><rect x="1623.5" y="1030" width="5" height="4.5" fill="none" stroke="#6A6A6A" stroke-width="1"/></svg>
<svg class="r" style="left:1652px;top:1020px" width="16" height="17" viewBox="1652 1020 16 17"><path d="M1653.5 1022.5h5.5l.5.5.5-.5h5.5v10.5h-5.5l-.5 1-.5-1h-5.5z" fill="none" stroke="#6A6A6A" stroke-width="1"/><path d="M1659.5 1023v10.5M1655 1025h3M1655 1027h3M1655 1029h3M1655 1031h3M1661 1025h3M1661 1027h3M1661 1029h3M1661 1031h3" stroke="#6A6A6A" stroke-width="0.7"/></svg>
<svg class="r" style="left:1690px;top:1021px" width="16" height="16" viewBox="1690 1021 16 16"><path d="M1691 1023.5h13" stroke="#6A6A6A" stroke-width="1.2"/><rect x="1692.5" y="1024" width="10" height="5.5" fill="none" stroke="#6A6A6A" stroke-width="1"/><path d="M1697.5 1029.5v5M1695 1034.5h5" stroke="#6A6A6A" stroke-width="1"/></svg>
<div class="r" style="left:1722px;top:1028px;width:6px;height:2px;background:#6A6A6A"></div>
<div class="r" style="left:1732px;top:1028px;width:100px;height:1px;background:#9A9A9A"></div>
<div class="r" style="left:1780px;top:1023px;width:4px;height:11px;background:#707070"></div>
<div class="r" style="left:1836px;top:1028px;width:8px;height:2px;background:#6A6A6A"></div>
<div class="r" style="left:1839px;top:1025px;width:2px;height:8px;background:#6A6A6A"></div>
<div class="t" style="left:1859.5px;top:1023.89px;font-size:11px;line-height:11px;color:#505050;font-weight:normal;letter-spacing:0px;">100%</div>
<svg class="r" style="left:1899px;top:1021px" width="15" height="16" viewBox="1899 1021 15 16"><rect x="1900.5" y="1023.5" width="12" height="11.5" fill="none" stroke="#6A6A6A" stroke-width="1"/><path d="M1906.5 1025v3M1905 1026.5l1.5-1.5 1.5 1.5M1906.5 1033.5v-3M1905 1032l1.5 1.5 1.5-1.5M1902 1029.3h3M1911 1029.3h-3" fill="none" stroke="#6A6A6A" stroke-width="0.8"/></svg>
<div class="t" style="left:1856px;top:1046.27px;font-size:11.5px;line-height:11.5px;color:#E8E8E8;font-weight:normal;letter-spacing:0px;">10:32 AM</div>
</body></html>
